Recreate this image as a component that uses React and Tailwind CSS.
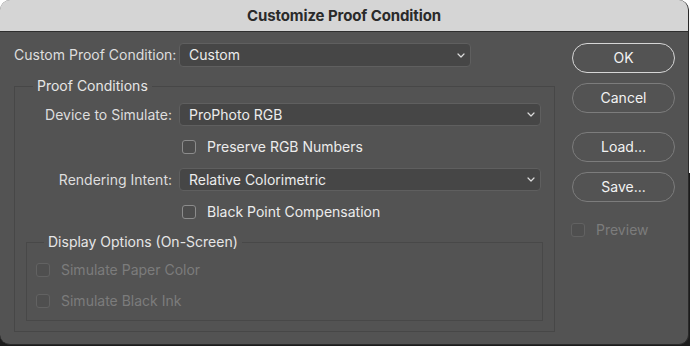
import React from "react";

const Chevron = () => (
  <svg width="8" height="5" viewBox="0 0 8 5" className="shrink-0">
    <path d="M1 1 L4 4 L7 1" fill="none" stroke="#dcdcdc" strokeWidth="1.2" strokeLinecap="round" strokeLinejoin="round" />
  </svg>
);

const Select = ({ value, width, height = "h-[24px]" }) => (
  <div
    className={`${width} ${height} shrink-0 flex items-center justify-between pl-[9px] pr-[5px] bg-[#464646] border border-[#5f5f5f] rounded-[4px] text-[#ececec]`}
  >
    <span>{value}</span>
    <Chevron />
  </div>
);

const Check = ({ label, disabled }) => (
  <div className="h-[20px] flex items-center">
    <div
      className={`w-[14px] h-[14px] rounded-[3px] border ${
        disabled ? "border-[#626262] bg-[#4f4f4f]" : "border-[#8c8c8c] bg-[#4d4d4d]"
      }`}
    />
    <span className={`ml-[11px] whitespace-nowrap ${disabled ? "text-[#7c7c7c]" : "text-[#ececec]"}`}>{label}</span>
  </div>
);

const Btn = ({ children, primary }) => (
  <button
    className={`w-[103px] h-[30px] rounded-full text-[#f2f2f2] ${
      primary ? "border-[1.5px] border-[#d6d6d6]" : "border border-[#7c7c7c]"
    }`}
  >
    {children}
  </button>
);

export default function App() {
  return (
    <div className="w-[690px] h-[346px] bg-[linear-gradient(to_bottom,#ffffff_50%,#1c1c1c_50%)] font-['Inter','Noto_Sans',sans-serif] text-[14px] leading-[18px]">
      <div className="w-[689px] h-[345px] rounded-[10px] overflow-hidden flex flex-col bg-[#535353] border-r border-b border-[#2a2a2a]">
        {/* Title bar */}
        <div className="h-[32px] shrink-0 bg-[#d5d5d5] border-b border-[#2e2e2e] flex items-center justify-center">
          <span className="text-[15px] font-bold text-[#2a2a2a] tracking-[-0.1px]">Customize Proof Condition</span>
        </div>

        <div className="flex flex-1">
          {/* Left column */}
          <div className="w-[555px] shrink-0 pl-[14px] pt-[11px]">
            <div className="flex items-center">
              <span className="w-[165px] shrink-0 pr-[7px] text-right whitespace-nowrap text-[#dedede]">Custom Proof Condition:</span>
              <Select value="Custom" width="w-[292px]" />
            </div>

            <fieldset className="mt-[10px] w-[541px] pb-[10px] border border-[#474747]">
              <legend className="ml-[18px] px-[4px] text-[#e6e6e6]">Proof Conditions</legend>
              <div className="mt-[8px] flex items-center">
                <span className="w-[164px] shrink-0 pr-[7px] text-right whitespace-nowrap text-[#dedede]">Device to Simulate:</span>
                <Select value="ProPhoto RGB" width="w-[362px]" height="h-[23px]" />
              </div>
              <div className="mt-[11px] ml-[167px]">
                <Check label="Preserve RGB Numbers" />
              </div>
              <div className="mt-[11px] flex items-center">
                <span className="w-[164px] shrink-0 pr-[7px] text-right whitespace-nowrap text-[#dedede]">Rendering Intent:</span>
                <Select value="Relative Colorimetric" width="w-[362px]" height="h-[23px]" />
              </div>
              <div className="mt-[11px] ml-[167px]">
                <Check label="Black Point Compensation" />
              </div>

              <fieldset className="mt-[11px] mx-[11px] pb-[9px] border border-[#484848] pl-[9px]">
                <legend className="ml-[8px] px-[4px] text-[#e6e6e6]">Display Options (On-Screen)</legend>
                <div className="mt-[9px]">
                  <Check label="Simulate Paper Color" disabled />
                </div>
                <div className="mt-[11px]">
                  <Check label="Simulate Black Ink" disabled />
                </div>
              </fieldset>
            </fieldset>
          </div>

          {/* Right column */}
          <div className="pl-[17px] pt-[11px] flex flex-col">
            <Btn primary>OK</Btn>
            <div className="mt-[10px]">
              <Btn>Cancel</Btn>
            </div>
            <div className="mt-[19px]">
              <Btn>Load...</Btn>
            </div>
            <div className="mt-[10px]">
              <Btn>Save...</Btn>
            </div>
            <div className="mt-[18px] ml-[-1px]">
              <Check label="Preview" disabled />
            </div>
          </div>
        </div>
      </div>
    </div>
  );
}
